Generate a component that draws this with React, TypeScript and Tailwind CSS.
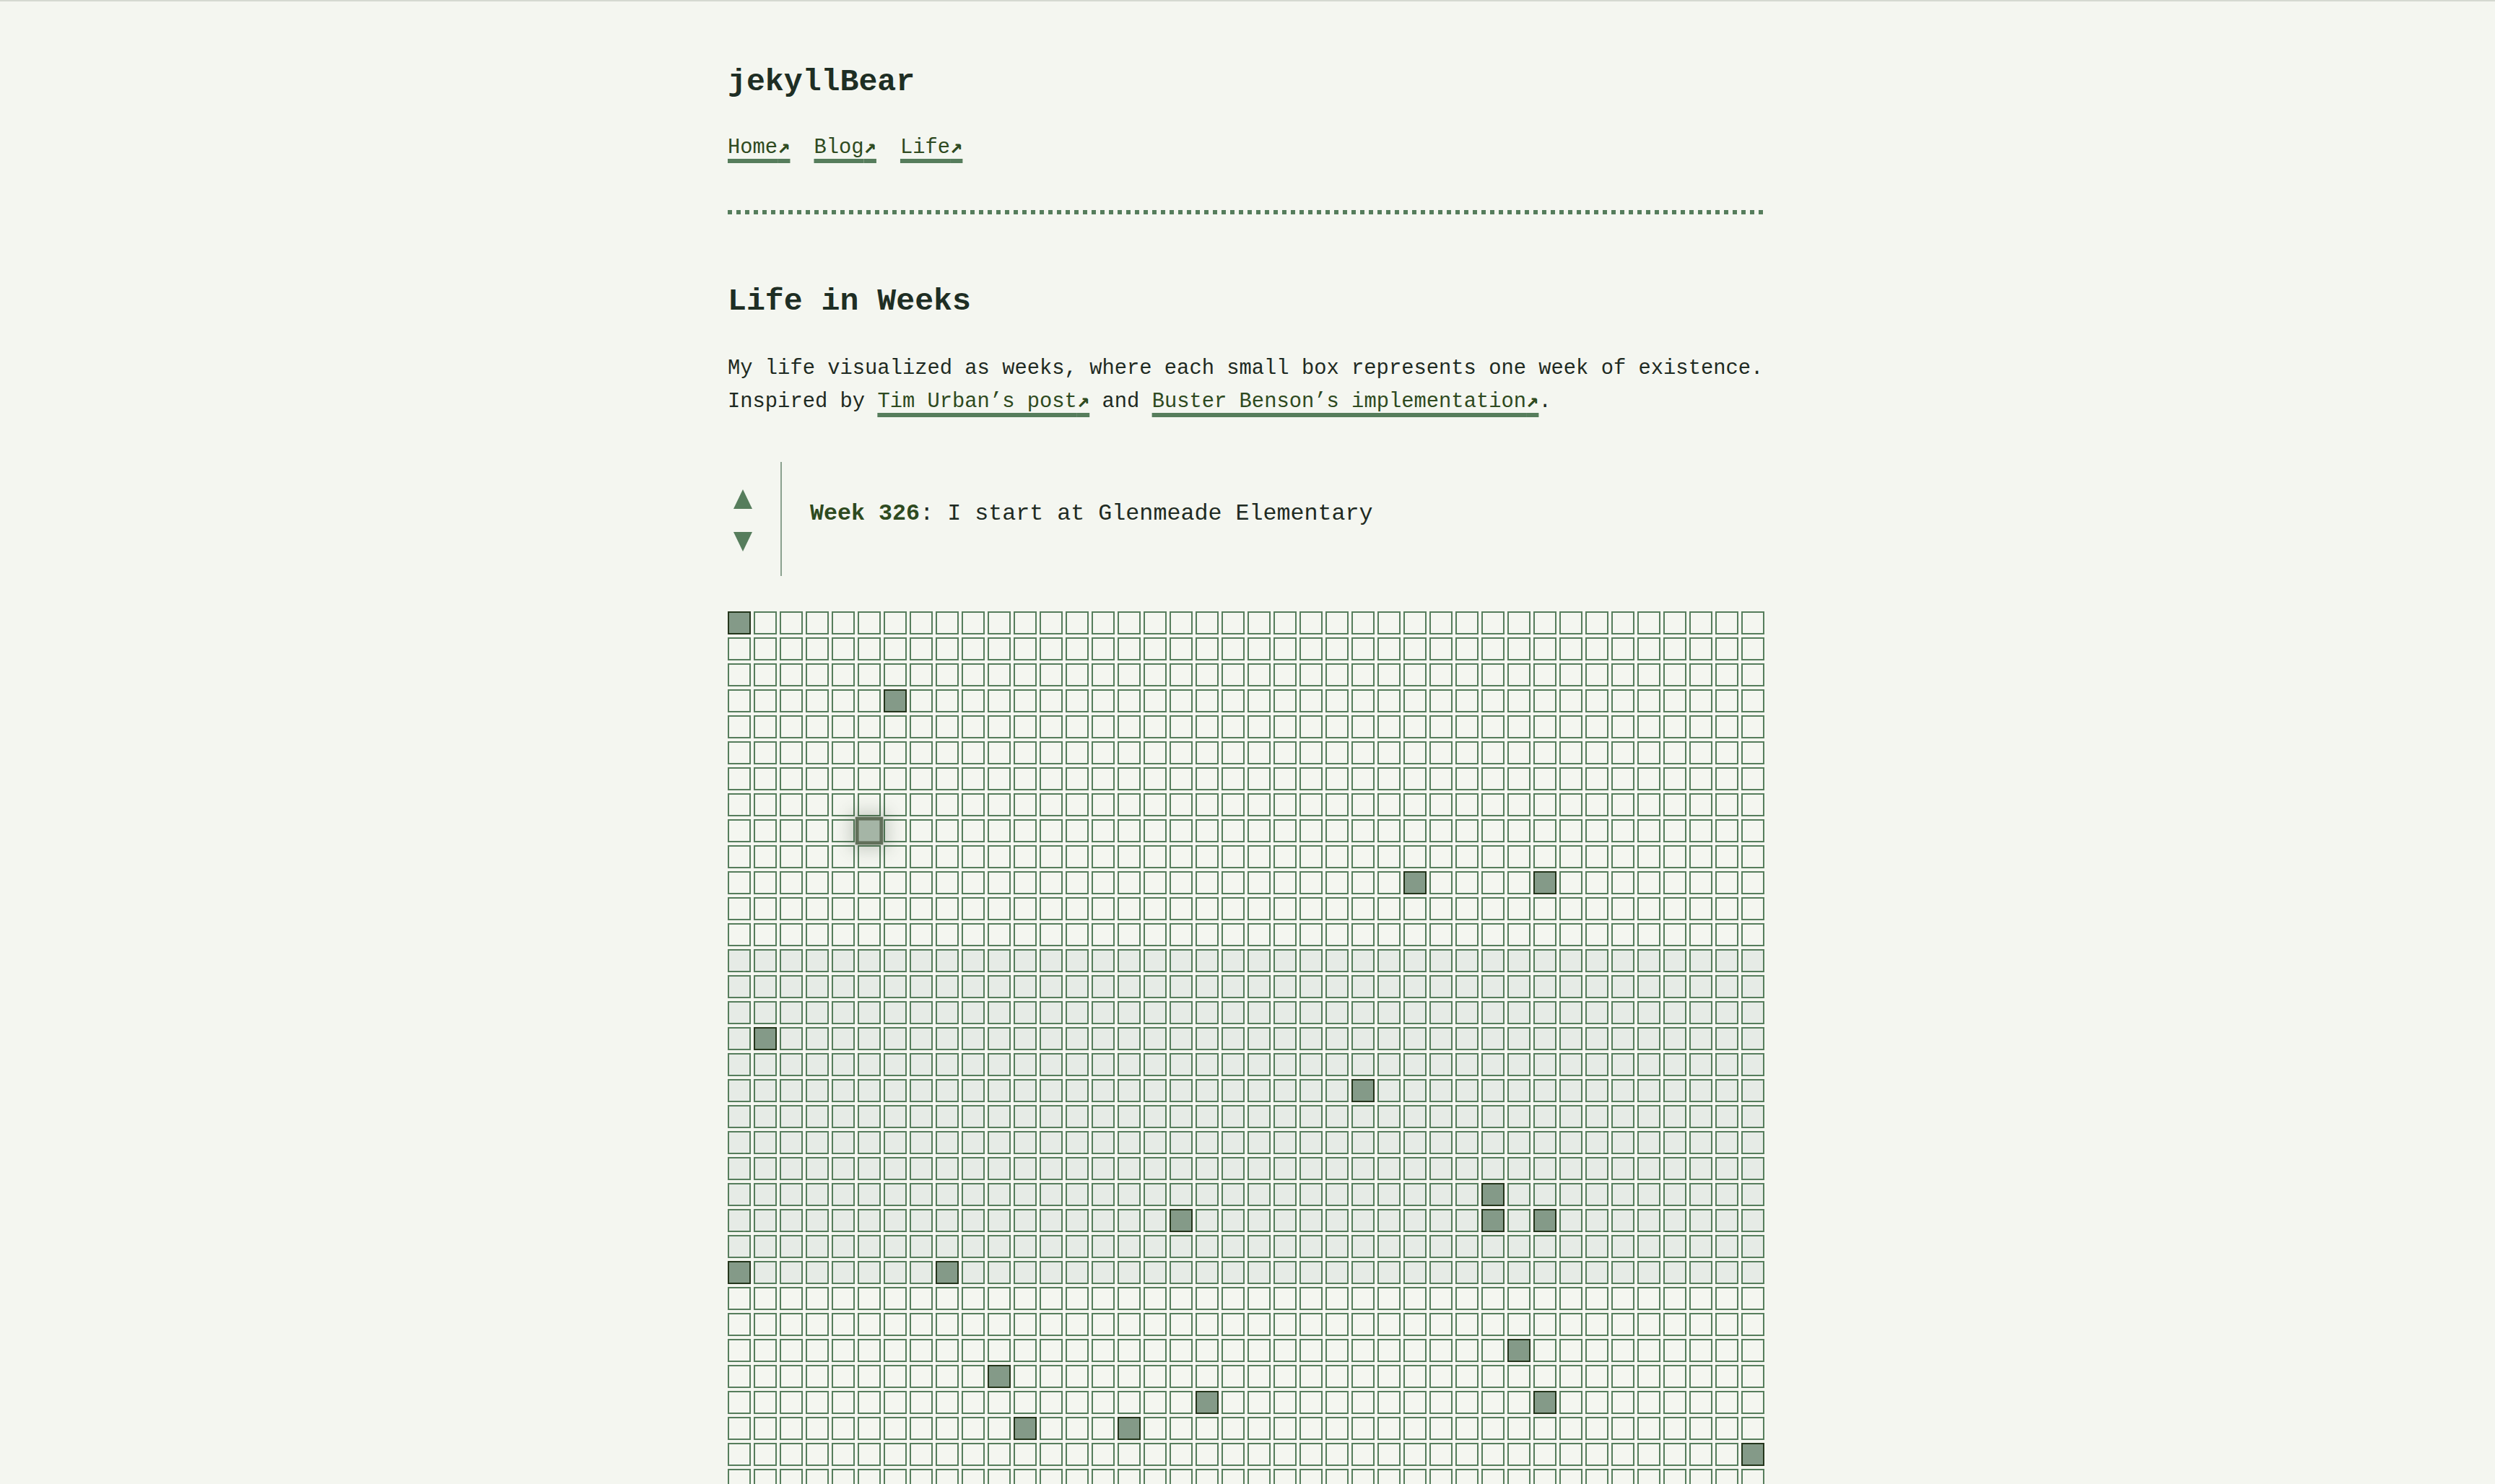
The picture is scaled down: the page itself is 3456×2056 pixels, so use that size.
import React from "react";

const COLS = 40;
const FILLED = new Set<number>([
  0,
  3 * COLS + 6,
  10 * COLS + 26,
  10 * COLS + 31,
  16 * COLS + 1,
  18 * COLS + 24,
  22 * COLS + 29,
  23 * COLS + 17,
  23 * COLS + 29,
  23 * COLS + 31,
  25 * COLS + 0,
  25 * COLS + 8,
  28 * COLS + 30,
  29 * COLS + 10,
  30 * COLS + 18,
  30 * COLS + 31,
  31 * COLS + 11,
  31 * COLS + 15,
  32 * COLS + 39,
]);
const SELECTED = 8 * COLS + 5;
const TOTAL = 80 * 52;

function Arrow() {
  return <span className="[font-family:'DejaVu_Sans_Mono',monospace] font-bold leading-[0]">↗</span>;
}

function LinkText({ children }: { children: React.ReactNode }) {
  return (
    <a
      href="#"
      className="text-[#2e4a20] underline decoration-[#567d5c] decoration-[6px] underline-offset-[8px] [text-decoration-skip-ink:none]"
    >
      {children}
      <Arrow />
    </a>
  );
}

function Cell({ i }: { i: number }) {
  const row = Math.floor(i / COLS);
  const shaded = row >= 13 && row <= 25;
  if (i === SELECTED) {
    return (
      <div className="relative z-10 size-[32px] border-4 border-[#24361c] bg-[#849a88] opacity-70 scale-[1.2] shadow-[0_0_18px_6px_rgba(30,45,30,0.28)]" />
    );
  }
  if (FILLED.has(i)) {
    return <div className="size-[32px] border-2 border-[#24361c] bg-[#849a88]" />;
  }
  return (
    <div
      className={
        shaded
          ? "size-[32px] border-2 border-[#567d5c] bg-[#e6ebe6]"
          : "size-[32px] border-2 border-[#567d5c]"
      }
    />
  );
}

export default function App() {
  return (
    <div className="h-screen overflow-hidden bg-[#f4f6f0] border-t-2 border-[#d5d9d1] [font-family:'Liberation_Mono',monospace] text-[#1e2a22]">
      <div className="mx-auto w-[1440px] pt-[86px]">
        <div className="text-[43.2px] leading-[52px] font-bold text-[#1e2e24]">jekyllBear</div>
        <nav className="mt-[42px] flex gap-[33px] text-[28.8px] leading-[46px]">
          <LinkText>Home</LinkText>
          <LinkText>Blog</LinkText>
          <LinkText>Life</LinkText>
        </nav>
        <div className="mt-[63px] h-[6px] bg-[repeating-linear-gradient(90deg,#567d5c_0px,#567d5c_6px,transparent_6px,transparent_12px)]" />
        <h1 className="mt-[95px] text-[43.2px] leading-[52px] font-bold text-[#1e2e24]">Life in Weeks</h1>
        <p className="mt-[44px] text-[28.8px] leading-[46px]">
          My life visualized as weeks, where each small box represents one week of existence.
          <br />
          Inspired by <LinkText>Tim Urban’s post</LinkText> and{" "}
          <LinkText>Buster Benson’s implementation</LinkText>.
        </p>
        <div className="mt-[60px] flex h-[158px]">
          <div className="w-[42px] pt-[4px] flex flex-col items-center justify-center gap-[32px]">
            <svg width="26" height="27" viewBox="0 0 26 27">
              <polygon points="13,0 26,27 0,27" fill="#567d5c" />
            </svg>
            <svg width="26" height="27" viewBox="0 0 26 27">
              <polygon points="0,0 26,0 13,27" fill="#567d5c" />
            </svg>
          </div>
          <div className="ml-[31px] border-l-2 border-[#8aa18f] pl-[39px] pb-[15px] flex items-center text-[31.7px] leading-[40px]">
            <span>
              <strong className="font-bold text-[#2e4a20]">Week 326</strong>: I start at Glenmeade Elementary
            </span>
          </div>
        </div>
        <div className="mt-[49px] grid grid-cols-[repeat(40,32px)] gap-[4px]">
          {Array.from({ length: TOTAL }, (_, i) => (
            <Cell key={i} i={i} />
          ))}
        </div>
      </div>
    </div>
  );
}
